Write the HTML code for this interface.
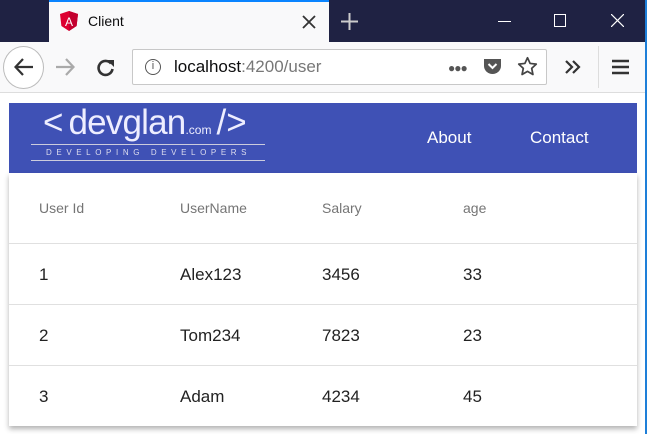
<!DOCTYPE html>
<html><head><style>
*{margin:0;padding:0;box-sizing:border-box}
body{width:647px;height:434px;background:#fff;font-family:"Liberation Sans",sans-serif;position:relative;overflow:hidden}
.abs{position:absolute}
</style></head><body>
<div class="abs" style="left:0;top:0;width:647px;height:42px;background:#1f2243"></div>
<div class="abs" style="left:49px;top:0;width:280px;height:42px;background:#f9f9fa;border-top:2px solid #0a84ff"></div>
<svg class="abs" style="left:60px;top:11px" width="18" height="20" viewBox="0 0 18 20"><path d="M9 0L0 3l1.4 12L9 20l7.6-5L18 3z" fill="#dd0031"/><path d="M9 0v20l7.6-5L18 3z" fill="#c3002f"/><text x="9" y="15" font-size="12" fill="#fff" text-anchor="middle" font-family="Liberation Sans">A</text></svg>
<div class="abs" style="left:88px;top:13px;font-size:14px;color:#0c0c0d">Client</div>
<svg class="abs" style="left:302px;top:15px" width="14" height="14"><path d="M1 1L13 13M13 1L1 13" stroke="#333" stroke-width="1.8"/></svg>
<svg class="abs" style="left:341px;top:13px" width="17" height="17"><path d="M8.5 0v17M0 8.5h17" stroke="#ccc" stroke-width="2"/></svg>
<div class="abs" style="left:498px;top:21px;width:13px;height:1px;background:#fff"></div>
<div class="abs" style="left:554px;top:14px;width:12px;height:13px;border:1px solid #fff"></div>
<svg class="abs" style="left:611px;top:14px" width="13" height="13"><path d="M0 0L13 13M13 0L0 13" stroke="#fff" stroke-width="1.2"/></svg>
<div class="abs" style="left:0;top:42px;width:647px;height:51px;background:#f9f9fa;border-bottom:1px solid #ddd"></div>
<div class="abs" style="left:3px;top:46px;width:41px;height:43px;border:1px solid #bbb;border-radius:50%;background:#fff"></div>
<svg class="abs" style="left:14px;top:58px" width="20" height="18"><path d="M19 9H2M9 1L1.5 9L9 17" stroke="#333" stroke-width="2.2" fill="none"/></svg>
<svg class="abs" style="left:55px;top:58px" width="20" height="18"><path d="M1 9H18M11 1L18.5 9L11 17" stroke="#aaa" stroke-width="2.2" fill="none"/></svg>
<svg class="abs" style="left:96px;top:58px" width="19" height="19"><path d="M15 5.5A7 7 0 1 0 16.5 11" stroke="#333" stroke-width="2.6" fill="none"/><path d="M11 2h7v7z" fill="#333"/></svg>
<div class="abs" style="left:132px;top:49px;width:415px;height:36px;background:#fff;border:1px solid #c8c8c8;border-radius:2px"></div>
<div class="abs" style="left:145px;top:59px;width:16px;height:16px;border:1.5px solid #555;border-radius:50%;font-size:11px;text-align:center;line-height:13px;color:#555">i</div>
<div class="abs" style="left:174px;top:57px;font-size:17px;color:#0c0c0d">localhost<span style="color:#777">:4200/user</span></div>
<div class="abs" style="left:448px;top:61px;font-size:12px;color:#555;font-weight:bold;letter-spacing:-1px">●●●</div>
<svg class="abs" style="left:484px;top:58px" width="17" height="17"><path d="M0 1h17v7a8.5 8 0 0 1-17 0z" fill="#555"/><path d="M4.5 6l4 4 4-4" stroke="#fff" stroke-width="2" fill="none"/></svg>
<svg class="abs" style="left:517px;top:56px" width="21" height="21" viewBox="0 0 24 24"><path d="M12 2l3 6.5 7 .8-5.2 4.8 1.4 7L12 17.6 5.8 21.1l1.4-7L2 9.3l7-.8z" stroke="#444" stroke-width="2" fill="none" stroke-linejoin="round"/></svg>
<svg class="abs" style="left:565px;top:60px" width="16" height="14"><path d="M1 1l6 6-6 6M8 1l6 6-6 6" stroke="#333" stroke-width="2.2" fill="none"/></svg>
<div class="abs" style="left:598px;top:46px;width:1px;height:42px;background:#ddd"></div>
<svg class="abs" style="left:612px;top:59px" width="17" height="16"><path d="M0 2h17M0 8h17M0 14h17" stroke="#333" stroke-width="2.4"/></svg>
<div class="abs" style="left:645px;top:0;width:2px;height:434px;background:#1e7fd8"></div>

<div class="abs" style="left:9px;top:103px;width:628px;height:70px;background:#3f51b5"></div>
<div class="abs" style="left:43px;top:103px;font-size:35px;color:#eef;font-weight:300;white-space:nowrap">&lt;<span style="margin-left:5px;letter-spacing:-0.8px">devglan</span><span style="font-size:12px">.com</span><span style="margin-left:5px">/&gt;</span></div>
<div class="abs" style="left:31px;top:144px;width:234px;height:1px;background:#ccd"></div>
<div class="abs" style="left:31px;top:160px;width:234px;height:1px;background:#ccd"></div>
<div class="abs" style="left:46px;top:148px;font-size:8px;color:#dde;letter-spacing:4.6px;white-space:nowrap">DEVELOPING DEVELOPERS</div>
<div class="abs" style="left:427px;top:128px;font-size:17px;color:#fff">About</div>
<div class="abs" style="left:530px;top:128px;font-size:17px;color:#fff">Contact</div>

<div class="abs" style="left:9px;top:173px;width:628px;height:253px;background:#fff;box-shadow:0 3px 5px rgba(0,0,0,.3)"></div>
<div class="abs" style="left:9px;top:243px;width:628px;height:1px;background:#e0e0e0"></div>
<div class="abs" style="left:9px;top:304px;width:628px;height:1px;background:#e0e0e0"></div>
<div class="abs" style="left:9px;top:365px;width:628px;height:1px;background:#e0e0e0"></div>
<div class="abs" style="top:200px;left:0;font-size:14px;color:#757575;width:647px">
<span class="abs" style="left:39px">User Id</span><span class="abs" style="left:180px">UserName</span><span class="abs" style="left:322px">Salary</span><span class="abs" style="left:463px">age</span></div>
<div class="abs" style="top:265px;left:0;font-size:17px;color:#222"><span class="abs" style="left:39px">1</span><span class="abs" style="left:180px">Alex123</span><span class="abs" style="left:322px">3456</span><span class="abs" style="left:463px">33</span></div>
<div class="abs" style="top:326px;left:0;font-size:17px;color:#222"><span class="abs" style="left:39px">2</span><span class="abs" style="left:180px">Tom234</span><span class="abs" style="left:322px">7823</span><span class="abs" style="left:463px">23</span></div>
<div class="abs" style="top:387px;left:0;font-size:17px;color:#222"><span class="abs" style="left:39px">3</span><span class="abs" style="left:180px">Adam</span><span class="abs" style="left:322px">4234</span><span class="abs" style="left:463px">45</span></div>
</body></html>
